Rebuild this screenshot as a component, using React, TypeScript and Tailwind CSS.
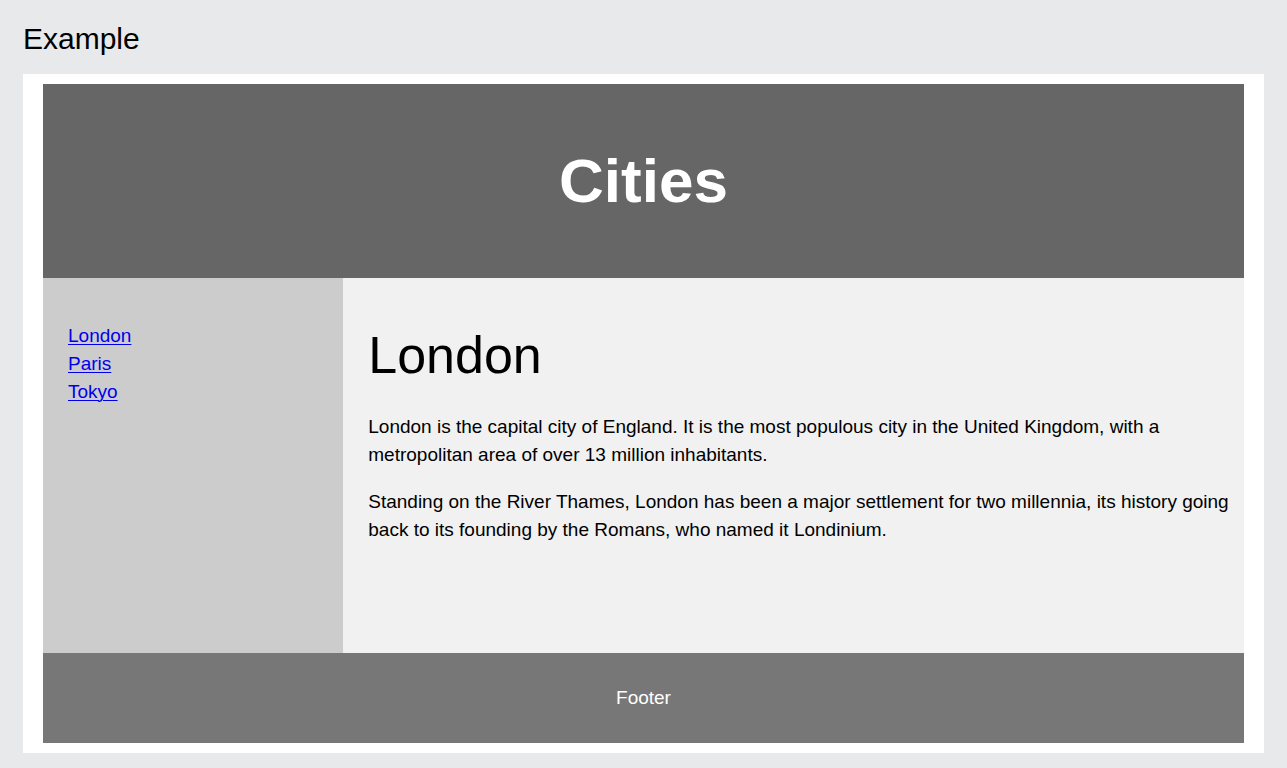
const cities = ["London", "Paris", "Tokyo"];

export default function App() {
  return (
    <div className="min-h-screen bg-[#e7e9eb] px-[23px] pt-[17px] pb-[15px] font-['Liberation_Sans',Arial,sans-serif] text-[19px] leading-7 text-black">
      <h3 className="mb-[13px] text-[30px] leading-[44px]">Example</h3>
      <div className="bg-white px-5 py-[10px]">
        <header className="bg-[#666666] px-8 py-[50px] text-center text-white">
          <h1 className="text-[62px] leading-[94px] font-bold">Cities</h1>
        </header>
        <section className="flex min-h-[375px]">
          <nav className="w-1/4 bg-[#cccccc] px-[25px] py-11">
            <ul>
              {cities.map((city) => (
                <li key={city}>
                  <a href={`#${city.toLowerCase()}`} className="text-[#0000ee] underline decoration-1 underline-offset-2">
                    {city}
                  </a>
                </li>
              ))}
            </ul>
          </nav>
          <article className="w-3/4 bg-[#f1f1f1] pt-[38px] pr-[10px] pl-[25px]">
            <h2 className="mb-[19px] text-[52px] leading-[78px]">London</h2>
            <p className="mb-[19px]">
              London is the capital city of England. It is the most populous city in the United Kingdom, with a
              metropolitan area of over 13 million inhabitants.
            </p>
            <p>
              Standing on the River Thames, London has been a major settlement for two millennia, its history going
              back to its founding by the Romans, who named it Londinium.
            </p>
          </article>
        </section>
        <footer className="bg-[#777777] px-[10px] py-[31px] text-center text-white">
          <p>Footer</p>
        </footer>
      </div>
    </div>
  );
}
